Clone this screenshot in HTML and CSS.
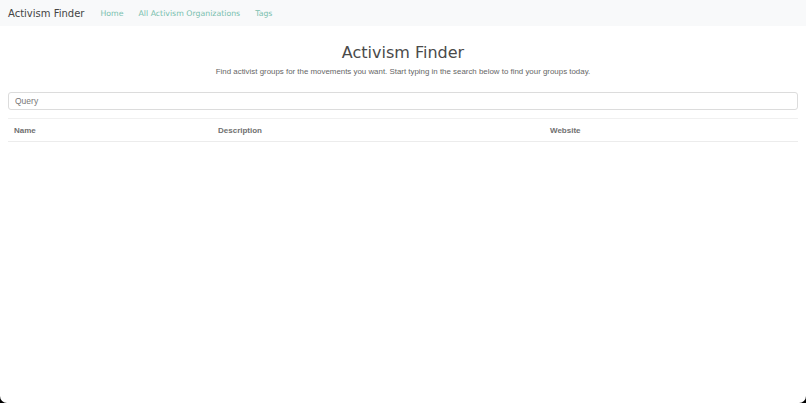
FILE: index.html
```html
<!DOCTYPE html>
<html lang="en">
<head>
    <meta charset="UTF-8">
    <meta name="viewport" content="width=device-width, initial-scale=1.0">
    <title>Activism Finder</title>
    <link rel="stylesheet" href="styles.css">
</head>
<body>
    <div class="page">
        <nav class="navbar">
            <a class="brand" href="#">Activism Finder</a>
            <a class="nav-link" href="#">Home</a>
            <a class="nav-link" href="#">All Activism Organizations</a>
            <a class="nav-link" href="#">Tags</a>
        </nav>

        <div class="container">
            <h1>Activism Finder</h1>
            <p class="lead">Find activist groups for the movements you want. Start typing in the search below to find your groups today.</p>

            <input type="text" class="search" placeholder="Query">

            <table class="results">
                <thead>
                    <tr>
                        <th class="col-name">Name</th>
                        <th class="col-desc">Description</th>
                        <th class="col-site">Website</th>
                    </tr>
                </thead>
                <tbody></tbody>
            </table>
        </div>
    </div>
</body>
</html>
```

FILE: styles.css
```css
* {
    margin: 0;
    padding: 0;
    box-sizing: border-box;
}
html {
    background: #000;
}
body {
    font-family: 'Liberation Sans', Arial, sans-serif;
    color: #555;
}
.page {
    background: #fff;
    min-height: 100vh;
    border-radius: 0 0 7px 7px;
}
.navbar {
    display: flex;
    align-items: center;
    height: 26px;
    padding: 0 8px;
    background-color: #f8f9fa;
}
.brand {
    font-family: 'DejaVu Sans', sans-serif;
    font-size: 10px;
    color: #444;
    text-decoration: none;
    margin-right: 16px;
}
.nav-link {
    font-family: 'DejaVu Sans', sans-serif;
    font-size: 7.8px;
    color: #79bfae;
    text-decoration: none;
    margin-right: 15px;
}
.container {
    padding: 0 8px;
}
h1 {
    font-family: 'DejaVu Sans', sans-serif;
    font-weight: normal;
    font-size: 16px;
    color: #4a4a4a;
    text-align: center;
    margin-top: 17px;
}
.lead {
    font-size: 7.9px;
    color: #666;
    text-align: center;
    margin-top: 5px;
}
.search {
    display: block;
    width: 100%;
    height: 18px;
    margin-top: 16px;
    padding: 0 6px;
    border: 1px solid #dcdcdc;
    border-radius: 3px;
    font-family: 'Liberation Sans', Arial, sans-serif;
    font-size: 8.5px;
    color: #555;
}
.search::placeholder {
    color: #777;
}
.results {
    width: 100%;
    margin-top: 8px;
    border-collapse: collapse;
}
.results th {
    text-align: left;
    font-size: 8px;
    font-weight: bold;
    color: #707070;
    height: 23px;
    padding: 0 6px;
    border-top: 1px solid #f0f0f0;
    border-bottom: 1px solid #ececec;
}
.col-name {
    width: 204px;
}
.col-desc {
    width: 332px;
}
```
